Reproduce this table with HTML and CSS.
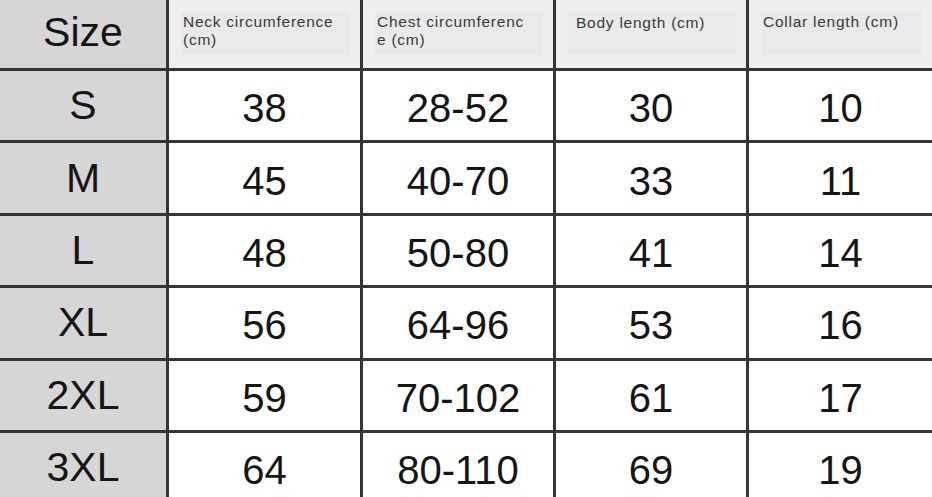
FILE: index.html
```html
<!DOCTYPE html>
<html lang="en">
<head>
<meta charset="utf-8">
<title>Size chart</title>
<link rel="stylesheet" href="styles.css">
</head>
<body>
<div class="chart">
  <div class="cell size head">Size</div>
  <div class="cell hcell"><div class="hbox">Neck circumference<br>(cm)</div></div>
  <div class="cell hcell"><div class="hbox">Chest circumferenc<br>e (cm)</div></div>
  <div class="cell hcell"><div class="hbox wide">Body length (cm)</div></div>
  <div class="cell hcell"><div class="hbox">Collar length (cm)</div></div>

  <div class="cell size">S</div>
  <div class="cell num">38</div>
  <div class="cell num">28-52</div>
  <div class="cell num">30</div>
  <div class="cell num">10</div>

  <div class="cell size">M</div>
  <div class="cell num">45</div>
  <div class="cell num">40-70</div>
  <div class="cell num">33</div>
  <div class="cell num">11</div>

  <div class="cell size">L</div>
  <div class="cell num">48</div>
  <div class="cell num">50-80</div>
  <div class="cell num">41</div>
  <div class="cell num">14</div>

  <div class="cell size">XL</div>
  <div class="cell num">56</div>
  <div class="cell num">64-96</div>
  <div class="cell num">53</div>
  <div class="cell num">16</div>

  <div class="cell size">2XL</div>
  <div class="cell num">59</div>
  <div class="cell num">70-102</div>
  <div class="cell num">61</div>
  <div class="cell num">17</div>

  <div class="cell size">3XL</div>
  <div class="cell num">64</div>
  <div class="cell num">80-110</div>
  <div class="cell num">69</div>
  <div class="cell num">19</div>
</div>
</body>
</html>
```

FILE: styles.css
```css
html, body {
  margin: 0;
  padding: 0;
  background: #ffffff;
}

body {
  width: 932px;
  height: 497px;
  overflow: hidden;
}

.chart {
  display: grid;
  grid-template-columns: 166px 191px 190px 190px 183px;
  grid-template-rows: 68px repeat(6, 69.4px);
  column-gap: 3px;
  row-gap: 3px;
  background: #353535;
  width: 932px;
}

.cell {
  background: #ffffff;
  display: flex;
  align-items: center;
  justify-content: center;
  font-family: "Liberation Sans", Arial, sans-serif;
  color: #151515;
  line-height: 1;
}

.size {
  background: #d6d6d6;
  font-size: 41px;
}

.size.head {
  padding-bottom: 3px;
}

.num {
  font-size: 40px;
  padding-top: 5px;
}

.hcell {
  background: #efefef;
  align-items: flex-start;
  justify-content: flex-start;
  padding: 12px 10px 0 12px;
}

.hbox {
  background: #e9e9e9;
  height: 43px;
  width: 100%;
  padding: 1px 2px 0 2px;
  box-sizing: border-box;
  font-family: "Liberation Sans", Arial, sans-serif;
  font-size: 15.5px;
  letter-spacing: 0.75px;
  line-height: 18px;
  color: #3a3a3a;
}

.hbox.wide {
  padding-left: 8px;
  padding-top: 2px;
}
```
